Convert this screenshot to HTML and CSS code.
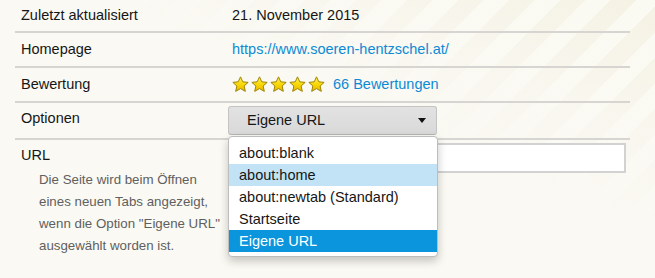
FILE: index.html
```html
<!DOCTYPE html>
<html lang="de">
<head>
  <meta charset="UTF-8">
  <meta name="viewport" content="width=device-width, initial-scale=1.0">
  <title>Optionen</title>
  <link rel="stylesheet" href="styles.css">
</head>
<body>
  <svg width="0" height="0" class="defs">
    <defs>
      <linearGradient id="starFill" x1="0" y1="0" x2="0" y2="1">
        <stop offset="0" stop-color="#fff06a"/>
        <stop offset="0.55" stop-color="#f8d600"/>
        <stop offset="1" stop-color="#e6b400"/>
      </linearGradient>
      <symbol id="star" viewBox="0 0 24 24">
        <polygon points="12,1.2 15.2,8.2 22.8,9 17.1,14.1 18.8,21.7 12,17.8 5.2,21.7 6.9,14.1 1.2,9 8.8,8.2" fill="url(#starFill)" stroke="#9c8400" stroke-width="1.4" stroke-linejoin="round"/>
      </symbol>
    </defs>
  </svg>

  <div class="prefs">
    <div class="row row-date">
      <div class="label">Zuletzt aktualisiert</div>
      <div class="value">21. November 2015</div>
    </div>

    <div class="row">
      <div class="label">Homepage</div>
      <div class="value"><a href="#">https://www.soeren-hentzschel.at/</a></div>
    </div>

    <div class="row">
      <div class="label">Bewertung</div>
      <div class="value rating">
        <span class="stars">
          <svg class="star"><use href="#star"/></svg>
          <svg class="star"><use href="#star"/></svg>
          <svg class="star"><use href="#star"/></svg>
          <svg class="star"><use href="#star"/></svg>
          <svg class="star"><use href="#star"/></svg>
        </span>
        <a href="#">66 Bewertungen</a>
      </div>
    </div>

    <div class="row row-options">
      <div class="label">Optionen</div>
      <div class="value">
        <div class="select-wrap">
          <div class="select">
            <span>Eigene URL</span>
            <span class="arrow"></span>
          </div>
          <ul class="popup">
            <li>about:blank</li>
            <li class="hover">about:home</li>
            <li>about:newtab (Standard)</li>
            <li>Startseite</li>
            <li class="selected">Eigene URL</li>
          </ul>
        </div>
      </div>
    </div>

    <div class="row row-url">
      <div class="label">
        URL
        <p class="desc">Die Seite wird beim Öffnen<br>eines neuen Tabs angezeigt,<br>wenn die Option "Eigene URL"<br>ausgewählt worden ist.</p>
      </div>
      <div class="value">
        <input type="text" class="url-input">
      </div>
    </div>
  </div>
</body>
</html>
```

FILE: styles.css
```css
body {
  margin: 0;
  height: 278px;
  overflow: hidden;
  font-family: 'Liberation Sans', Arial, sans-serif;
  font-size: 14.5px;
  color: #161616;
  background:
    linear-gradient(to bottom left, rgba(250, 249, 243, 0) 0%, rgba(250, 249, 243, 0.7) 25%, #faf9f3 45%),
    repeating-linear-gradient(135deg, #f5f2e4 0px, #f5f2e4 18px, #fbfaf2 18px, #fbfaf2 36px);
}
.defs {
  position: absolute;
}
.prefs {
  margin-left: 15px;
  width: 615px;
}
.row {
  display: grid;
  grid-template-columns: 213px 1fr;
  align-items: center;
  border-bottom: 2px solid #d6d5d1;
}
.row-date { height: 31px; }
.row:nth-child(2),
.row:nth-child(3) { height: 33px; }
.label {
  padding-left: 6px;
  line-height: 17px;
}
.value {
  padding-left: 4px;
  line-height: 17px;
}
a {
  color: #0d8ad6;
  text-decoration: none;
}
.rating {
  display: flex;
  align-items: center;
}
.stars {
  display: flex;
  gap: 2px;
  margin-right: 8px;
}
.star {
  width: 17px;
  height: 17px;
}

/* Optionen */
.row-options {
  height: 35px;
  align-items: start;
}
.row-options .label {
  padding-top: 7px;
}
.row-options .value {
  padding-left: 0;
}
.select-wrap {
  position: relative;
  width: 209px;
  margin-top: 3px;
}
.select {
  display: flex;
  align-items: center;
  justify-content: space-between;
  box-sizing: border-box;
  height: 29px;
  padding: 0 10px 0 18px;
  background: linear-gradient(#e2e2e2, #d9d9d9);
  border: 1px solid #c4c4c4;
  border-bottom-color: #b5b5b5;
  border-radius: 3px;
  font-size: 14.5px;
}
.arrow {
  width: 0;
  height: 0;
  border-left: 4.5px solid transparent;
  border-right: 4.5px solid transparent;
  border-top: 5px solid #111;
}
.popup {
  position: absolute;
  top: 30px;
  left: 0;
  z-index: 2;
  box-sizing: border-box;
  width: 210px;
  margin: 0;
  padding: 5px 0 4px;
  list-style: none;
  background: #fff;
  border: 1px solid #bdbdbd;
  border-radius: 4px;
  box-shadow: 0 4px 10px rgba(0, 0, 0, 0.22);
  font-size: 14.5px;
}
.popup li {
  height: 22px;
  line-height: 22px;
  padding-left: 10px;
}
.popup .hover {
  background: #c1e3f5;
}
.popup .selected {
  background: #0a95dd;
  color: #fff;
}

/* URL */
.row-url {
  border-bottom: none;
  align-items: start;
}
.row-url .label {
  padding-top: 7px;
}
.desc {
  margin: 5px 0 0;
  padding-left: 18px;
  font-size: 13.3px;
  line-height: 22px;
  color: #5f5f5f;
  white-space: nowrap;
}
.url-input {
  display: block;
  box-sizing: border-box;
  width: 394px;
  height: 30px;
  margin-top: 3px;
  border: 2px solid #d2d2d2;
  background: #fff;
  outline: none;
}
```
